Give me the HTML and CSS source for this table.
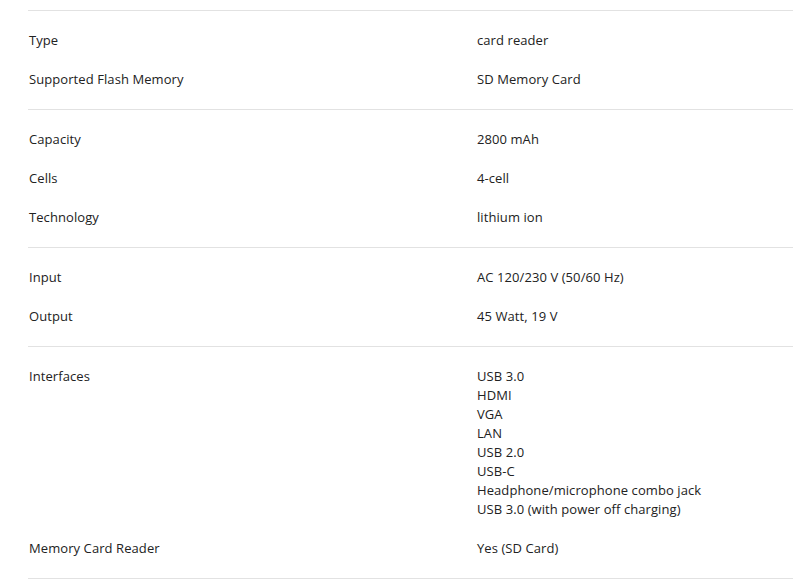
FILE: index.html
```html
<!DOCTYPE html>
<html lang="en">
<head>
<meta charset="utf-8">
<title>Specifications</title>
<link rel="stylesheet" href="styles.css">
</head>
<body>
<div class="specs">
  <section class="group">
    <div class="row"><div class="label">Type</div><div class="value">card reader</div></div>
    <div class="row"><div class="label">Supported Flash Memory</div><div class="value">SD Memory Card</div></div>
  </section>
  <section class="group">
    <div class="row"><div class="label">Capacity</div><div class="value">2800 mAh</div></div>
    <div class="row"><div class="label">Cells</div><div class="value">4-cell</div></div>
    <div class="row"><div class="label">Technology</div><div class="value">lithium ion</div></div>
  </section>
  <section class="group">
    <div class="row"><div class="label">Input</div><div class="value">AC 120/230 V (50/60 Hz)</div></div>
    <div class="row"><div class="label">Output</div><div class="value">45 Watt, 19 V</div></div>
  </section>
  <section class="group last">
    <div class="row"><div class="label">Interfaces</div><div class="value">USB 3.0<br>HDMI<br>VGA<br>LAN<br>USB 2.0<br>USB-C<br>Headphone/microphone combo jack<br>USB 3.0 (with power off charging)</div></div>
    <div class="row"><div class="label">Memory Card Reader</div><div class="value">Yes (SD Card)</div></div>
  </section>
</div>
</body>
</html>
```

FILE: styles.css
```css
html, body {
  margin: 0;
  padding: 0;
  background: #ffffff;
}
body {
  font-family: "Open Sans", "Liberation Sans", sans-serif;
  font-size: 13px;
  line-height: 19px;
  letter-spacing: 0.08px;
  color: #222222;
}
.specs {
  margin: 10px 0 0 28px;
}
.group {
  border-top: 1px solid #e2e2e2;
  padding: 20px 0;
  display: flex;
  flex-direction: column;
  gap: 20px;
}
.group.last {
  border-bottom: 1px solid #e2e2e2;
}
.row {
  display: grid;
  grid-template-columns: 449px 1fr;
}
.label {
  padding-left: 1px;
}
```
